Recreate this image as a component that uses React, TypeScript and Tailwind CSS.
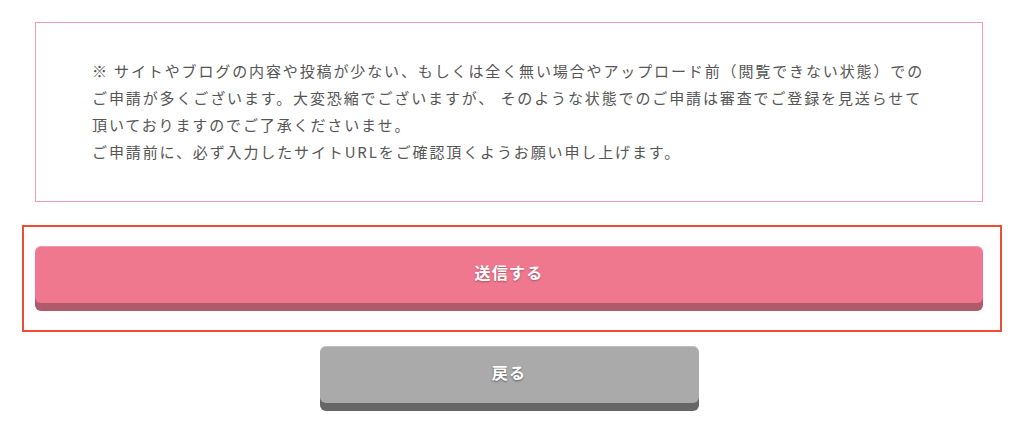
import React from 'react';

const App = () => {
  return (
    <div className="w-[1024px] h-[433px] bg-white overflow-hidden font-['Noto_Sans_CJK_JP','Noto_Sans',sans-serif]">
      <div className="w-[948px] ml-[35px]">
        <div className="mt-[22px] border border-[#f39fb0] pl-[56px] pr-[20px] pt-[34px] pb-[36px]">
          <p className="text-[15px] leading-[27px] tracking-[0.125em] text-[#555555] whitespace-nowrap">
            ※ サイトやブログの内容や投稿が少ない、もしくは全く無い場合やアップロード前（閲覧できない状態）での
            <br />
            ご申請が多くございます。大変恐縮でございますが、 そのような状態でのご申請は審査でご登録を見送らせて
            <br />
            頂いておりますのでご了承くださいませ。
            <br />
            ご申請前に、必ず入力したサイトURLをご確認頂くようお願い申し上げます。
          </p>
        </div>

        <div className="w-[980px] -ml-[13px] mt-[23px] border-2 border-[#ef4d36] pl-[11px] pt-[19px] pb-[27px]">
          <button className="w-[948px] h-[57px] pb-[5px] rounded-[6px] bg-[#ef788f] shadow-[0_8px_0_#b05b6c,inset_0_1px_0_rgba(255,255,255,0.25)] text-white font-bold text-[16px] tracking-[0.08em] [text-shadow:0_1px_2px_rgba(0,0,0,0.3)]">
            送信する
          </button>
        </div>

        <div className="flex justify-center mt-[14px]">
          <button className="w-[379px] h-[57px] pb-[5px] rounded-[6px] bg-[#aaaaaa] shadow-[0_8px_0_#666666,inset_0_1px_0_rgba(255,255,255,0.25)] text-white font-bold text-[16px] tracking-[0.08em] [text-shadow:0_1px_2px_rgba(0,0,0,0.45)]">
            戻る
          </button>
        </div>
      </div>
    </div>
  );
};

export default App;
